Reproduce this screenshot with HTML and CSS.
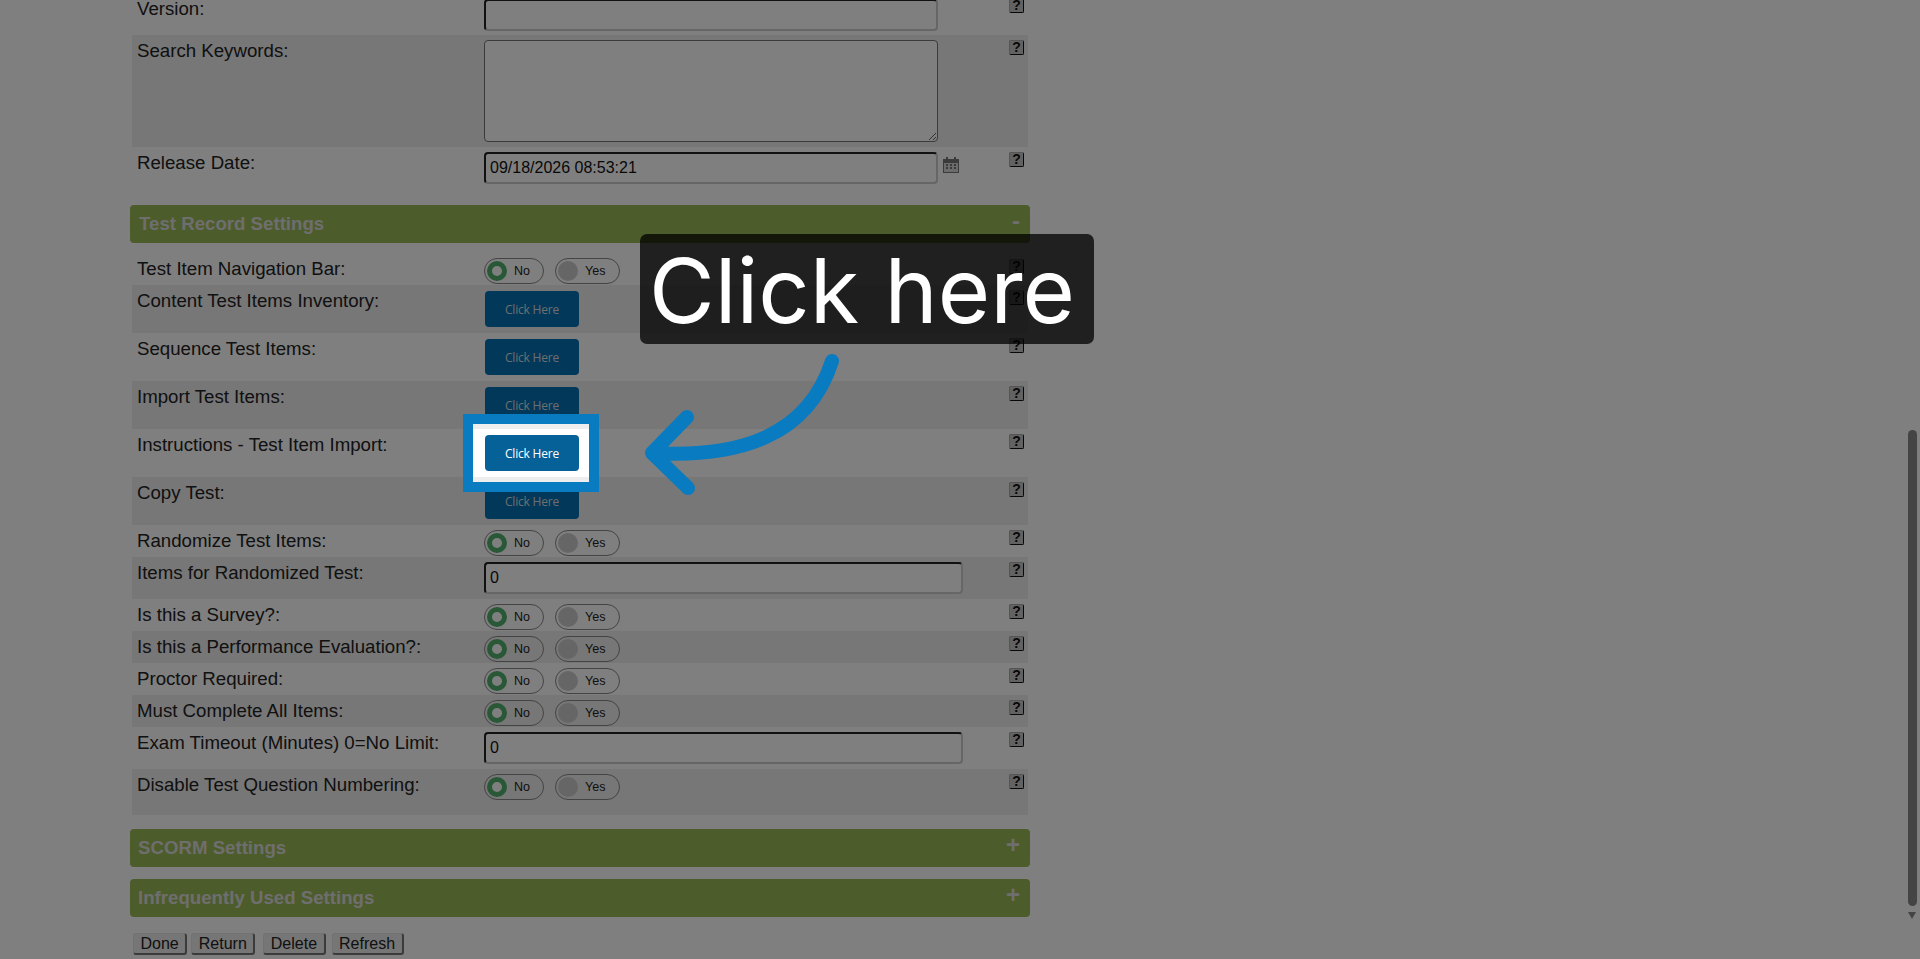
FILE: index.html
```html
<!DOCTYPE html>
<html lang="en">
<head>
<meta charset="utf-8">
<title>Test Settings</title>
<link rel="stylesheet" href="styles.css">
</head>
<body>
<main class="page">
  <section class="rows rows-top">
    <div class="row row-version"><label>Version:</label><div class="field"><input class="input" type="text"></div><span class="help">?</span></div>
    <div class="row shade row-keywords"><label>Search Keywords:</label><div class="field"><textarea class="area"></textarea></div><span class="help">?</span></div>
    <div class="row row-date"><label>Release Date:</label><div class="field"><input class="input" type="text" value="09/18/2026 08:53:21">
      <svg class="cal" viewBox="0 0 16 16" width="16" height="16"><path fill="#777" d="M0 2h3V0h2v2h6V0h2v2h3v14H0z"/><path fill="#d8d8d8" d="M1 6h14v9H1z"/><path fill="#777" d="M3 7h2v2H3zM7 7h2v2H7zM11 7h2v2h-2zM3 10h2v2H3zM7 10h2v2H7zM11 10h2v2h-2z"/></svg>
    </div><span class="help">?</span></div>
  </section>

  <h2 class="bar bar-open"><span>Test Record Settings</span><b class="sign">-</b></h2>

  <section class="rows rows-test">
    <div class="row row-toggle row-first"><label>Test Item Navigation Bar:</label><div class="field toggles"><span class="tog on"><i></i>No</span><span class="tog"><i></i>Yes</span></div><span class="help">?</span></div>
    <div class="row shade row-btn"><label>Content Test Items Inventory:</label><div class="field"><a class="btn">Click Here</a></div><span class="help">?</span></div>
    <div class="row row-btn"><label>Sequence Test Items:</label><div class="field"><a class="btn">Click Here</a></div><span class="help">?</span></div>
    <div class="row shade row-btn"><label>Import Test Items:</label><div class="field"><a class="btn">Click Here</a></div><span class="help">?</span></div>
    <div class="row row-btn"><label>Instructions - Test Item Import:</label><div class="field"><a class="btn btn-hover">Click Here</a></div><span class="help">?</span></div>
    <div class="row shade row-btn"><label>Copy Test:</label><div class="field"><a class="btn">Click Here</a></div><span class="help">?</span></div>
    <div class="row row-toggle"><label>Randomize Test Items:</label><div class="field toggles"><span class="tog on"><i></i>No</span><span class="tog"><i></i>Yes</span></div><span class="help">?</span></div>
    <div class="row shade row-input"><label>Items for Randomized Test:</label><div class="field"><input class="input input-wide" type="text" value="0"></div><span class="help">?</span></div>
    <div class="row row-toggle"><label>Is this a Survey?:</label><div class="field toggles"><span class="tog on"><i></i>No</span><span class="tog"><i></i>Yes</span></div><span class="help">?</span></div>
    <div class="row shade row-toggle"><label>Is this a Performance Evaluation?:</label><div class="field toggles"><span class="tog on"><i></i>No</span><span class="tog"><i></i>Yes</span></div><span class="help">?</span></div>
    <div class="row row-toggle"><label>Proctor Required:</label><div class="field toggles"><span class="tog on"><i></i>No</span><span class="tog"><i></i>Yes</span></div><span class="help">?</span></div>
    <div class="row shade row-toggle"><label>Must Complete All Items:</label><div class="field toggles"><span class="tog on"><i></i>No</span><span class="tog"><i></i>Yes</span></div><span class="help">?</span></div>
    <div class="row row-input"><label>Exam Timeout (Minutes) 0=No Limit:</label><div class="field"><input class="input input-wide" type="text" value="0"></div><span class="help">?</span></div>
    <div class="row shade row-last"><label>Disable Test Question Numbering:</label><div class="field toggles"><span class="tog on"><i></i>No</span><span class="tog"><i></i>Yes</span></div><span class="help">?</span></div>
  </section>

  <h2 class="bar bar-scorm"><span>SCORM Settings</span><b class="sign">+</b></h2>
  <h2 class="bar bar-infreq"><span>Infrequently Used Settings</span><b class="sign">+</b></h2>

  <div class="actions">
    <button class="act">Done</button><button class="act">Return</button><button class="act act-delete">Delete</button><button class="act act-refresh">Refresh</button>
  </div>
</main>

<div class="scroll-thumb"></div>
<div class="scroll-arrow"></div>

<div class="spot"></div>
<div class="callout">Click here</div>
<svg class="arrow" viewBox="0 0 240 165" width="240" height="165">
  <path d="M192 21C168 96 100 118 12 113M12 113L47 77M12 113L48 148" fill="none" stroke="#097bc1" stroke-width="14" stroke-linecap="round" stroke-linejoin="round"/>
</svg>
</body>
</html>
```
FILE: styles.css
```css
* { box-sizing: border-box; }
html, body { margin: 0; height: 959px; overflow: hidden; background: #fff; }
body { font-family: "Liberation Sans", Arial, sans-serif; color: #222; position: relative; }
.page { width: 900px; margin: -33px 0 0 130px; }

.rows { margin: 0 2px; }
.rows-test { padding-top: 11px; margin-bottom: 14px; }

.row { display: flex; align-items: flex-start; position: relative; padding: 0 4px 0 5px; }
.shade { background: #eee; }
.row label { width: 347px; flex: none; font-size: 18.67px; line-height: 20px; padding-top: 6px; }
.row-first label, .row-version label { padding-top: 5px; }
.field { flex: 1; display: flex; align-items: center; }

.row-version { height: 68px; padding-top: 27px; }
.row-version .field { padding-top: 5px; }
.row-keywords { height: 112px; }
.row-date { height: 58px; }
.row-keywords .field { padding-top: 5px; }
.row-date .field { padding-top: 5px; }
.row-toggle { height: 32px; }
.row-first { height: 31px; }
.row-btn { height: 48px; }
.row-input { height: 42px; }
.row-last { height: 46px; }
.row-toggle .field, .row-last .field { padding-top: 5px; }
.row-first .field { padding-top: 4px; }
.row-btn .field { padding-top: 6px; }
.row-input .field { padding-top: 5px; }

.input { width: 454px; height: 32px; margin: 0; padding: 1px 4px; font: 16px "Liberation Sans", Arial, sans-serif; color: #111;
  background: #fff; border: 2px solid; border-color: #222 #ccc #ccc #222; border-radius: 4px; outline: 0; }
.input-wide { width: 479px; }
.area { width: 454px; height: 102px; margin: 0; padding: 2px; border: 1px solid #767676; border-radius: 4px; background: #fff; outline: 0; display: block; }
.cal { margin: 5px 0 0 5px; flex: none; align-self: flex-start; }

.help { position: absolute; right: 4px; width: 15px; height: 15px; top: 5px; background: #c4c4c4; border: 1px solid #aaa;
  border-right: 1.5px solid #111; border-bottom: 1.5px solid #111; border-radius: 2px; font: bold 14px/13px "Liberation Sans", Arial, sans-serif; color: #111; text-align: center; }
.row-version .help { top: 31px; }

.bar { display: flex; justify-content: space-between; align-items: center; height: 38px; margin: 0; padding: 0 10px 0 9px; border-radius: 4px;
  background: #9bb856; color: #ddd; font: bold 18.67px/38px "Liberation Sans", Arial, sans-serif; }
.bar-scorm { margin-bottom: 12px; padding-left: 8px; }
.bar-infreq { padding-left: 8px; }
.sign { font-size: 24px; line-height: 24px; margin-top: -6px; }

.toggles { gap: 11px; }
.tog { display: flex; align-items: center; height: 26px; border: 1px solid #888; border-radius: 13px; padding: 0 2px; font: 12.5px "Liberation Sans", Arial, sans-serif; color: #222; }
.tog:first-child { width: 60px; }
.tog:last-child { width: 65px; }
.tog i { width: 20px; height: 20px; border-radius: 50%; background: #ccc; margin-right: 7px; flex: none; }
.tog.on i { background: #fff; border: 5px solid #52b06f; }

.btn { display: flex; align-items: center; justify-content: center; width: 94px; height: 36px; margin-left: 1px; border-radius: 4px; background: #0470b4; color: #ddd;
  font: 12px "Open Sans", sans-serif; letter-spacing: -0.2px; }
.btn-hover { background: #066199; color: #fff; }

.actions { display: flex; gap: 4px; padding: 16px 0 0 3px; }
.act { height: 22px; padding: 0 6.5px; margin: 0; font: 16px/18px "Liberation Sans", Arial, sans-serif; color: #222; background: #ececec; border: 1px solid #e4e4e4;
  border-right: 2px solid #777; border-bottom: 2px solid #777; border-radius: 3px; }
.act-delete { margin-left: 4px; }
.act-refresh { margin-left: 2px; }

.scroll-thumb { position: absolute; left: 1908px; top: 430px; width: 9px; height: 476px; border-radius: 5px; background: #888; }
.scroll-arrow { position: absolute; left: 1908px; top: 912px; width: 0; height: 0; border-left: 4.5px solid transparent; border-right: 4.5px solid transparent; border-top: 7px solid #888; }

.spot { position: absolute; left: 463px; top: 414px; width: 136px; height: 78px; border: 10px solid #097bc1; box-shadow: 0 0 0 3000px rgba(0,0,0,.5); }
.callout { position: absolute; left: 640px; top: 234px; width: 454px; height: 110px; padding-left: 9px; border-radius: 7px; background: rgba(0,0,0,.75); color: #fff;
  font: 90px/114px Inter, sans-serif; white-space: nowrap; }
.arrow { position: absolute; left: 640px; top: 340px; }
```
